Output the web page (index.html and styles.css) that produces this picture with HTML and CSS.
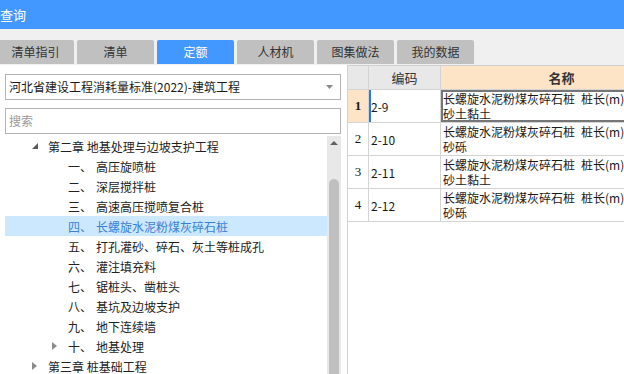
FILE: index.html
```html
<!DOCTYPE html>
<html lang="zh-CN">
<head>
  <meta charset="UTF-8">
  <title>查询</title>
  <link rel="stylesheet" href="styles.css">
</head>
<body>
  <div class="window">
    <div class="titlebar">查询</div>

    <div class="tabstrip">
      <div class="tab">清单指引</div>
      <div class="tab">清单</div>
      <div class="tab active">定额</div>
      <div class="tab">人材机</div>
      <div class="tab">图集做法</div>
      <div class="tab">我的数据</div>
    </div>

    <div class="main">
      <div class="left">
        <div class="select">
          <span>河北省建设工程消耗量标准(2022)-建筑工程</span>
          <svg class="caret" width="7" height="4" viewBox="0 0 7 4"><path d="M0 0H7L3.5 4Z" fill="#8a8a8a"/></svg>
        </div>
        <div class="search">搜索</div>

        <div class="tree">
          <div class="tree-list">
            <div class="node lvl0">
              <span class="arrow"><svg width="6" height="6" viewBox="0 0 6 6"><path d="M6 0V6H0Z" fill="#5a5a5a"/></svg></span>
              <span>第二章 地基处理与边坡支护工程</span>
            </div>
            <div class="node lvl1"><span class="arrow"></span><span class="num">一、</span><span>高压旋喷桩</span></div>
            <div class="node lvl1"><span class="arrow"></span><span class="num">二、</span><span>深层搅拌桩</span></div>
            <div class="node lvl1"><span class="arrow"></span><span class="num">三、</span><span>高速高压搅喷复合桩</span></div>
            <div class="node lvl1 selected"><span class="arrow"></span><span class="num">四、</span><span>长螺旋水泥粉煤灰碎石桩</span></div>
            <div class="node lvl1"><span class="arrow"></span><span class="num">五、</span><span>打孔灌砂、碎石、灰土等桩成孔</span></div>
            <div class="node lvl1"><span class="arrow"></span><span class="num">六、</span><span>灌注填充料</span></div>
            <div class="node lvl1"><span class="arrow"></span><span class="num">七、</span><span>锯桩头、凿桩头</span></div>
            <div class="node lvl1"><span class="arrow"></span><span class="num">八、</span><span>基坑及边坡支护</span></div>
            <div class="node lvl1"><span class="arrow"></span><span class="num">九、</span><span>地下连续墙</span></div>
            <div class="node lvl1">
              <span class="arrow"><svg width="5" height="8" viewBox="0 0 5 8"><path d="M0 0L5 4L0 8Z" fill="#8c8c8c"/></svg></span>
              <span class="num">十、</span><span>地基处理</span>
            </div>
            <div class="node lvl0">
              <span class="arrow"><svg width="5" height="8" viewBox="0 0 5 8"><path d="M0 0L5 4L0 8Z" fill="#8c8c8c"/></svg></span>
              <span>第三章 桩基础工程</span>
            </div>
          </div>
          <div class="scrollbar">
            <svg class="up" width="8" height="4" viewBox="0 0 8 4"><path d="M0 4H8L4 0Z" fill="#606060"/></svg>
            <div class="thumb"></div>
          </div>
        </div>
      </div>

      <div class="right">
        <div class="grid">
          <div class="cell head"></div>
          <div class="cell head center">编码</div>
          <div class="cell head name-head">名称</div>

          <div class="cell rownum current">1</div>
          <div class="cell code current-code">2-9</div>
          <div class="cell name focus"><div>长螺旋水泥粉煤灰碎石桩&ensp;桩长(m)</div><div>砂土黏土</div></div>

          <div class="cell rownum">2</div>
          <div class="cell code">2-10</div>
          <div class="cell name"><div>长螺旋水泥粉煤灰碎石桩&ensp;桩长(m)</div><div>砂砾</div></div>

          <div class="cell rownum">3</div>
          <div class="cell code">2-11</div>
          <div class="cell name"><div>长螺旋水泥粉煤灰碎石桩&ensp;桩长(m)</div><div>砂土黏土</div></div>

          <div class="cell rownum">4</div>
          <div class="cell code">2-12</div>
          <div class="cell name"><div>长螺旋水泥粉煤灰碎石桩&ensp;桩长(m)</div><div>砂砾</div></div>
        </div>
      </div>
    </div>
  </div>
</body>
</html>
```

FILE: styles.css
```css
body {
  margin: 0;
  padding: 0;
  background: #fff;
  font-family: "Noto Sans CJK SC", "Noto Sans", sans-serif;
  color: #222;
}

.window {
  width: 624px;
  height: 374px;
  overflow: hidden;
}

.titlebar {
  height: 29px;
  line-height: 29px;
  background: #4298ff;
  color: #fff;
  font-size: 13px;
  padding-left: 0;
}

.tabstrip {
  display: flex;
  gap: 3px;
  height: 36px;
  padding-top: 11px;
  box-sizing: border-box;
  margin-left: -3px;
  background: #f0f0f0;
}

.tab {
  width: 77px;
  height: 24px;
  line-height: 24px;
  text-align: center;
  font-size: 12px;
  color: #333;
  background: #c0c0c0;
  border-radius: 2px 2px 0 0;
}

.tab.active {
  background: #4298ff;
  color: #fff;
}

.main {
  display: flex;
  height: 309px;
}

.left {
  width: 342px;
  border-right: 1px solid #d0d0d0;
  padding: 9px 0 0 5px;
}

.select,
.search {
  width: 336px;
  height: 26px;
  box-sizing: border-box;
  border: 1px solid #b4b4b4;
  font-size: 12px;
  line-height: 24px;
  padding-left: 3px;
}

.select {
  display: flex;
  justify-content: space-between;
  align-items: center;
  margin-bottom: 8px;
  color: #1a1a1a;
}

.select .caret {
  margin-right: 7px;
}

.search {
  color: #9a9a9a;
}

.tree {
  display: flex;
  margin-top: 2px;
  height: 240px;
}

.tree-list {
  width: 322px;
  font-size: 12px;
}

.node {
  display: flex;
  align-items: center;
  height: 20px;
  white-space: nowrap;
}

.node.lvl0 {
  padding-left: 27px;
}

.node.lvl1 {
  padding-left: 47px;
}

.node.selected {
  background: #cce8ff;
  color: #3b7fd6;
}

.arrow {
  width: 16px;
  display: flex;
  align-items: center;
}

.num {
  width: 28px;
}

.scrollbar {
  width: 14px;
  background: #e8e8e8;
  display: flex;
  flex-direction: column;
  align-items: center;
}

.scrollbar .up {
  margin-top: 5px;
}

.thumb {
  width: 10px;
  flex: 1;
  margin-top: 34px;
  background: #c0c0c0;
  border-radius: 5px 5px 0 0;
}

.right {
  flex: 1;
  overflow: hidden;
}

.grid {
  display: grid;
  grid-template-columns: 21px 72px 242px;
  grid-template-rows: 24px repeat(4, 33px);
  border-top: 1px solid #d0d0d0;
  font-size: 12px;
}

.cell {
  border-right: 1px solid #d4d4d4;
  border-bottom: 1px solid #d4d4d4;
  box-sizing: border-box;
  color: #1a1a1a;
}

.head {
  background: #e8e8e8;
  font-size: 13px;
  line-height: 23px;
  color: #333;
}

.center {
  text-align: center;
}

.name-head {
  background: #fde4c6;
  text-align: center;
  font-weight: bold;
}

.rownum {
  display: flex;
  align-items: center;
  justify-content: center;
  font-family: "Liberation Serif", serif;
  font-size: 13px;
}

.rownum.current {
  background: #fde4c6;
  font-weight: bold;
}

.code {
  display: flex;
  align-items: center;
  padding-left: 2px;
  font-size: 12px;
}

.current-code {
  box-shadow: inset 2px 0 0 #2a78e4;
}

.name {
  padding: 1px 0 0 2px;
  line-height: 15px;
  white-space: nowrap;
}

.name.focus {
  box-shadow: inset 0 0 0 2px #767676;
}
```
